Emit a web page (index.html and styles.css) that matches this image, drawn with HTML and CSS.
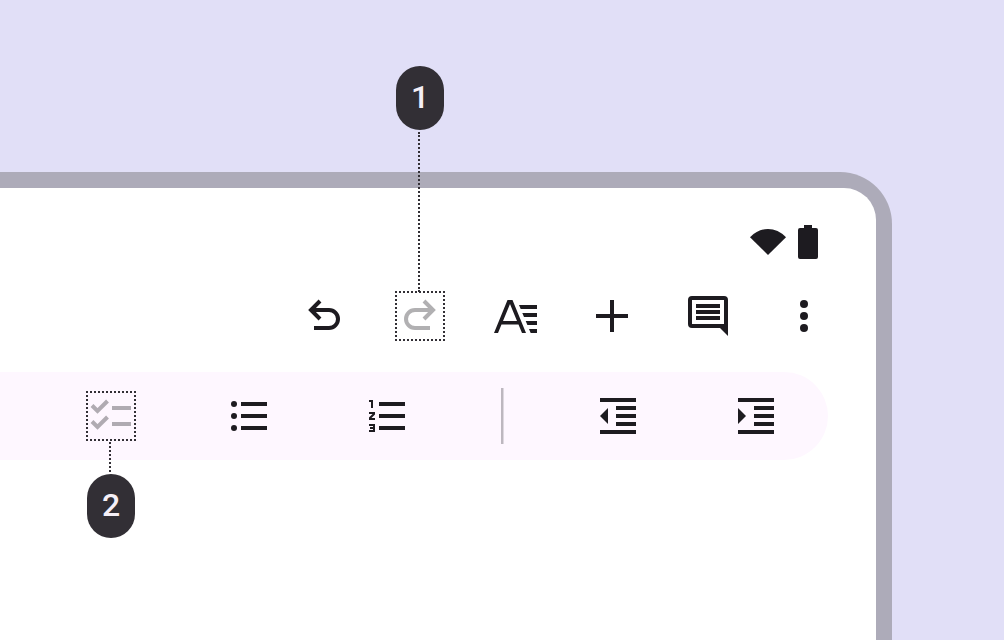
FILE: index.html
```html
<!DOCTYPE html>
<html lang="en">
<head>
<meta charset="utf-8">
<meta name="viewport" content="width=device-width, initial-scale=1.0">
<title>Toolbar</title>
<link rel="stylesheet" href="styles.css">
</head>
<body>
  <main class="device">
    <div class="screen">
      <div class="status">
        <svg class="wifi" viewBox="0 0 36 26"><path d="M0 8.200Q8 0 18 0T36 8.200L18 26z"/></svg>
        <svg class="battery" viewBox="0 0 20 34"><path d="M6 0h8v3h4a2 2 0 0 1 2 2v27a2 2 0 0 1-2 2H2a2 2 0 0 1-2-2V5a2 2 0 0 1 2-2h4z"/></svg>
      </div>

      <div class="actions">
        <button class="icon-btn" aria-label="Undo">
          <svg class="line" viewBox="0 0 48 48"><path d="M11 18H29a9 9 0 0 1 0 18H14M20 9l-9 9 9 9"/></svg>
        </button>
        <div class="marked">
          <button class="icon-btn" aria-label="Redo" disabled>
            <svg class="line" viewBox="0 0 48 48"><path d="M37 18H19a9 9 0 0 0 0 18H34M28 9l9 9-9 9"/></svg>
          </button>
          <div class="callout callout-top">
            <span class="badge">1</span>
            <span class="leader leader-long"></span>
          </div>
        </div>
        <button class="icon-btn" aria-label="Text format">
          <svg viewBox="0 0 48 48"><path d="M2 41 15.500 8h5L34 41h-4l-3.500-8.500H9.500L6 41zM11 29h14L18 12z"/><path d="M27 13h18v4H28.700zM30.300 21H45v4H32zM33.700 29H45v4h-9.600zM37 37h8v4h-6.300z"/></svg>
        </button>
        <button class="icon-btn" aria-label="Insert">
          <svg viewBox="0 0 48 48"><path d="M22 8h4v14h14v4H26v14h-4V26H8v-4h14z"/></svg>
        </button>
        <button class="icon-btn" aria-label="Comment">
          <svg viewBox="0 0 48 48"><path d="M8 4h32a4 4 0 0 1 4 4v36l-8-8H8a4 4 0 0 1-4-4V8a4 4 0 0 1 4-4zM8 8v24h32V8z"/><path d="M12 12h24v4H12zM12 18h24v4H12zM12 24h24v4H12z"/></svg>
        </button>
        <button class="icon-btn" aria-label="More options">
          <svg viewBox="0 0 48 48"><circle cx="24" cy="12" r="4"/><circle cx="24" cy="24" r="4"/><circle cx="24" cy="36" r="4"/></svg>
        </button>
      </div>

      <div class="toolbar">
        <div class="marked">
          <button class="icon-btn" aria-label="Checklist" disabled>
            <svg class="line" viewBox="0 0 48 48"><path d="M5 13.500l5.500 5.500 10-10M5 29.500l5.500 5.500 10-10M25 16h19M25 32h19"/></svg>
          </button>
          <div class="callout callout-bottom">
            <span class="leader"></span>
            <span class="badge">2</span>
          </div>
        </div>
        <button class="icon-btn" aria-label="Bulleted list">
          <svg viewBox="0 0 48 48"><circle cx="9" cy="12" r="3"/><circle cx="9" cy="24" r="3"/><circle cx="9" cy="36" r="3"/><path d="M16 10h26v4H16zM16 22h26v4H16zM16 34h26v4H16z"/></svg>
        </button>
        <button class="icon-btn" aria-label="Numbered list">
          <svg viewBox="0 0 48 48"><path d="M16 10h26v4H16zM16 22h26v4H16zM16 34h26v4H16z"/><path class="marks" d="M6 9h3v7M6 21h5v1l-4 4v1h5M6 33h5v6H6M7 36h4"/></svg>
        </button>
        <span class="divider"></span>
        <button class="icon-btn" aria-label="Decrease indent">
          <svg viewBox="0 0 48 48"><path d="M6 6h36v4H6zM22 14h20v4H22zM22 22h20v4H22zM22 30h20v4H22zM6 38h36v4H6zM14 16v16l-8-8z"/></svg>
        </button>
        <button class="icon-btn" aria-label="Increase indent">
          <svg viewBox="0 0 48 48"><path d="M6 6h36v4H6zM22 14h20v4H22zM22 22h20v4H22zM22 30h20v4H22zM6 38h36v4H6zM6 16v16l8-8z"/></svg>
        </button>
      </div>
    </div>
  </main>
</body>
</html>
```

FILE: styles.css
```css
* {box-sizing: border-box;}

body {
  margin: 0;
  min-height: 100vh;
  padding: 172px 112px 0 0;
  display: flex;
  background-color: #e1dff7;
  font-family: Roboto, sans-serif;
  color: #1d1b20;
}

/* only the top right corner of the device is visible */
.device {
  flex: 1;
  display: flex;
  padding: 16px 16px 0 0;
  border-top-right-radius: 52px;
  background-color: #adabb9;
}

.screen {
  flex: 1;
  display: flex;
  flex-direction: column;
  gap: 32px;
  padding-top: 36px;
  border-top-right-radius: 32px;
  background-color: #fff;
}

svg {
  display: block;
  fill: currentColor;
  fill-rule: evenodd;
}

.status {
  display: flex;
  justify-content: flex-end;
  align-items: center;
  gap: 12px;
  height: 36px;
  padding-right: 58px;
}

.wifi {
  width: 36px;
  height: 26px;
}

.battery {
  width: 20px;
  height: 34px;
}

.actions {
  display: flex;
  justify-content: flex-end;
  gap: 48px;
  padding-right: 48px;
}

.toolbar {
  display: flex;
  justify-content: flex-end;
  align-items: center;
  gap: 90px;
  height: 88px;
  margin-right: 48px;
  padding-right: 48px;
  border-radius: 0 44px 44px 0;
  background-color: #fef7ff;
}

.icon-btn {
  display: block;
  width: 48px;
  height: 48px;
  padding: 0;
  border: 0;
  background: none;
  color: #1d1b20;
  cursor: pointer;
}

.icon-btn:disabled {
  color: #1d1b20;
  cursor: default;
}

.icon-btn:disabled svg {
  opacity: 0.34;
}

.line {
  fill: none;
  stroke: currentColor;
  stroke-width: 4;
}

.marks {
  fill: none;
  stroke: currentColor;
  stroke-width: 2;
}

.divider {
  width: 3px;
  height: 56px;
  background-color: #bdb7bf;
  border-right: 1px solid #ded8e0;
}

/* numbered callouts */
.marked {
  position: relative;
  outline: 2px dotted #322f35;
  outline-offset: -1px;
}

.callout {
  position: absolute;
  left: 0;
  width: 100%;
  display: flex;
  flex-direction: column;
  align-items: center;
  gap: 2px;
}

.callout-top {
  bottom: 100%;
}

.callout-bottom {
  top: 100%;
  padding-top: 2px;
}

.badge {
  width: 48px;
  height: 64px;
  border-radius: 24px;
  background-color: #322f35;
  color: #f5eff7;
  font-size: 32px;
  font-weight: 500;
  line-height: 62px;
  text-align: center;
}

.leader {
  width: 4px;
  height: 30px;
  border-left: 2px dotted #322f35;
}

.leader-long {
  height: 160px;
}
```
